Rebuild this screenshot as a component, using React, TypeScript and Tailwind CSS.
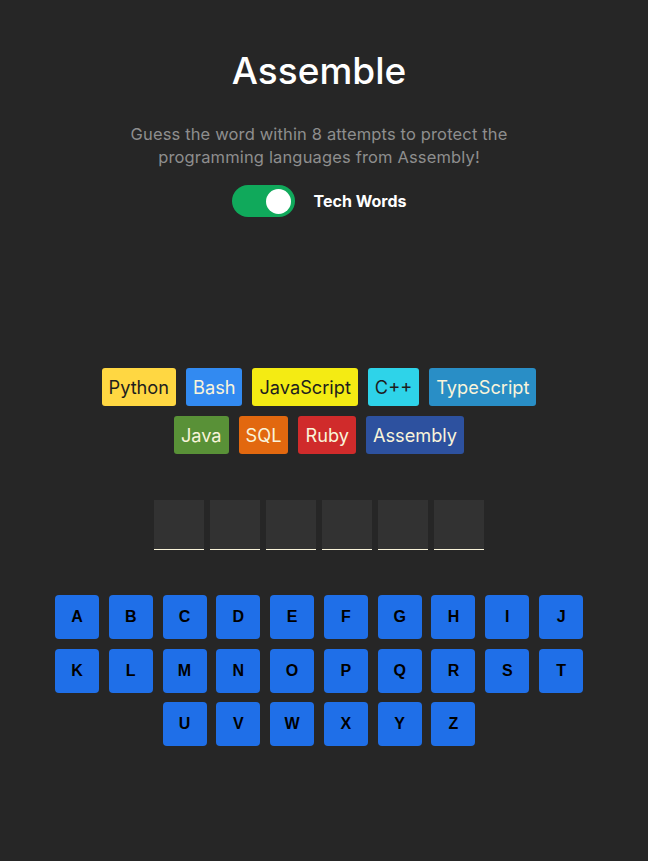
import React from "react";

const langs = [
  { name: "Python", bg: "bg-[#FFD742]", fg: "text-[#1E1E1E]" },
  { name: "Bash", bg: "bg-[#328AF1]", fg: "text-[#F9F4DA]" },
  { name: "JavaScript", bg: "bg-[#F4EB13]", fg: "text-[#1E1E1E]" },
  { name: "C++", bg: "bg-[#2ED3E9]", fg: "text-[#1E1E1E]" },
  { name: "TypeScript", bg: "bg-[#298EC6]", fg: "text-[#F9F4DA]" },
  { name: "Java", bg: "bg-[#599137]", fg: "text-[#F9F4DA]" },
  { name: "SQL", bg: "bg-[#E2680F]", fg: "text-[#F9F4DA]" },
  { name: "Ruby", bg: "bg-[#D02B2B]", fg: "text-[#F9F4DA]" },
  { name: "Assembly", bg: "bg-[#2D519F]", fg: "text-[#F9F4DA]" },
];

const letters = "ABCDEFGHIJKLMNOPQRSTUVWXYZ".split("");

export default function App() {
  return (
    <div
      className="min-h-[861px] w-full bg-[#262626]"
      style={{ fontFamily: "Inter, 'Open Sans', sans-serif" }}
    >
      <main className="mx-auto flex w-[638px] flex-col items-center mr-[10px]">
        <header className="flex flex-col items-center pt-[49px]">
          <h1 className="text-[37px] font-medium leading-[44px] text-white">Assemble</h1>
          <p className="mt-[30px] w-[400px] text-center text-[16.5px] leading-[23px] tracking-[0.15px] text-[#8E8E8E]">
            Guess the word within 8 attempts to protect the programming languages from Assembly!
          </p>
          <div className="mt-[16px] flex items-center gap-[19px]">
            <div className="relative h-[32px] w-[63px] rounded-full bg-[#10A95B]">
              <span className="absolute right-[4px] top-[4px] h-[25px] w-[25px] rounded-full bg-white" />
            </div>
            <span className="text-[16px] font-bold text-white">Tech Words</span>
          </div>
        </header>

        <section className="h-[151px]" />

        <section className="flex w-[460px] flex-wrap justify-center gap-[10px]">
          {langs.map((l) => (
            <span
              key={l.name}
              className={`${l.bg} ${l.fg} rounded-[3px] px-[7px] text-[18.2px] leading-[38px]`}
            >
              {l.name}
            </span>
          ))}
        </section>

        <section className="mt-[46px] flex gap-[6px]">
          {Array.from({ length: 6 }).map((_, i) => (
            <span
              key={i}
              className="h-[50px] w-[50px] border-b border-[#F9F4DA] bg-[#323232]"
            />
          ))}
        </section>

        <section className="mt-[45px] flex w-[530px] flex-wrap justify-center gap-x-[9.8px] gap-y-[9.5px]">
          {letters.map((c) => (
            <button
              key={c}
              className="h-[44px] w-[44px] rounded-[4px] bg-[#1F6FE8] text-[16px] font-bold text-black"
              style={{ fontFamily: "'Liberation Sans', Arial, sans-serif" }}
            >
              {c}
            </button>
          ))}
        </section>
      </main>
    </div>
  );
}
